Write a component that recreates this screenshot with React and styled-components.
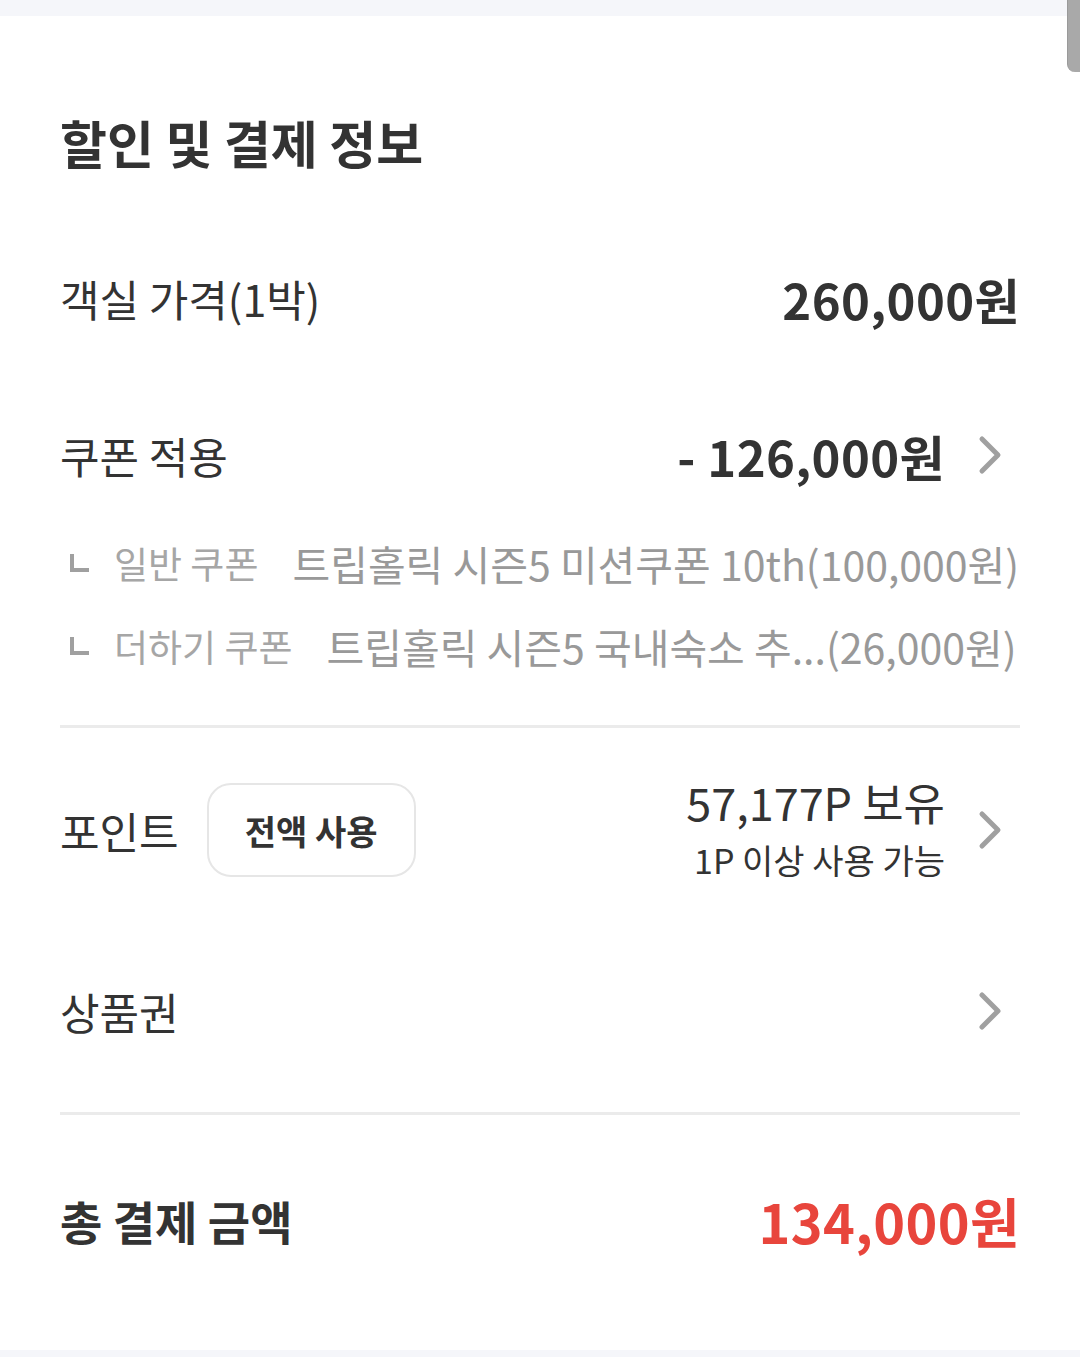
import React from "react";
import styled, { createGlobalStyle } from "styled-components";

const GlobalStyle = createGlobalStyle`
  html, body {
    margin: 0;
    padding: 0;
    background: #ffffff;
  }
  body {
    font-family: "Noto Sans CJK KR", "Noto Sans", sans-serif;
    color: #333333;
  }
`;

const Page = styled.div`
  position: relative;
  width: 1080px;
  height: 1357px;
  overflow: hidden;
  display: flex;
  flex-direction: column;
`;

const Band = styled.div`
  height: ${p => p.$h}px;
  background: #f5f6fa;
  flex-shrink: 0;
`;

const Scrollbar = styled.div`
  position: absolute;
  top: 0;
  right: 0;
  width: 12px;
  height: 72px;
  background: #a9a9a9;
  border-left: 1px solid #9a9a9a;
  border-bottom-left-radius: 8px;
`;

const Section = styled.div`
  flex: 1;
  padding: 0 60px;
  display: flex;
  flex-direction: column;
`;

const Title = styled.h2`
  margin: 91px 0 0;
  height: 70px;
  line-height: 70px;
  font-size: 51px;
  font-weight: 700;
  color: #333;
`;

const Row = styled.div`
  margin-top: ${p => p.$top}px;
  height: ${p => p.$h || 80}px;
  display: flex;
  align-items: center;
  justify-content: space-between;
`;

const Label = styled.div`
  font-size: ${p => (p.$bold ? 46 : 43)}px;
  font-weight: ${p => (p.$bold ? 700 : 400)};
  color: #333;
  display: flex;
  align-items: center;
  gap: 28px;
`;

const Right = styled.div`
  display: flex;
  align-items: center;
`;

const Amount = styled.div`
  font-size: ${p => p.$size || 49}px;
  font-weight: 700;
  color: ${p => p.$color || "#333"};
  letter-spacing: 0.4px;
`;

const SubList = styled.div`
  margin-top: 38px;
  display: flex;
  flex-direction: column;
  gap: 23px;
`;

const SubItem = styled.div`
  height: 60px;
  display: flex;
  align-items: center;
  white-space: nowrap;
  min-width: 0;
`;

const Corner = styled.span`
  width: 19px;
  height: 18px;
  margin: 0 0 0 10px;
  border-left: 4px solid #a0a0a0;
  border-bottom: 4px solid #a0a0a0;
  flex-shrink: 0;
  box-sizing: border-box;
`;

const SubLabel = styled.span`
  margin-left: 25px;
  font-size: 37px;
  color: #a6a6a6;
  flex-shrink: 0;
`;

const SubText = styled.span`
  margin-left: 34px;
  font-size: 41px;
  color: #999;
  overflow: hidden;
  text-overflow: ellipsis;
  flex: 1;
  min-width: 0;
`;

const Divider = styled.hr`
  margin: ${p => p.$top}px 0 0;
  border: none;
  height: 3px;
  background: #ebebeb;
`;

const PillButton = styled.button`
  height: 94px;
  width: 209px;
  border: 2px solid #e6e6e6;
  border-radius: 24px;
  background: #fff;
  font-family: inherit;
  font-size: 34px;
  font-weight: 700;
  color: #333;
  padding: 0;
`;

const PointInfo = styled.div`
  display: flex;
  flex-direction: column;
  align-items: flex-end;
`;

const PointMain = styled.div`
  font-size: 45px;
  line-height: 60px;
  color: #333;
`;

const PointSub = styled.div`
  font-size: 34px;
  line-height: 56px;
  color: #333;
`;

const Chevron = () => (
  <svg width="40" height="40" viewBox="0 0 40 40" style={{ marginLeft: 24, marginRight: 11, flexShrink: 0 }}>
    <path d="M13 4 L29 20 L13 36" fill="none" stroke="#a0a0a0" strokeWidth="5" strokeLinecap="round" strokeLinejoin="round" />
  </svg>
);

const coupons = [
  { label: "일반 쿠폰", text: "트립홀릭 시즌5 미션쿠폰 10th(100,000원)" },
  { label: "더하기 쿠폰", text: "트립홀릭 시즌5 국내숙소 추...(26,000원)" }
];

export default function App() {
  return (
    <>
      <GlobalStyle />
      <Page>
        <Band $h={16} />
        <Scrollbar />
        <Section>
          <Title>할인 및 결제 정보</Title>

          <Row $top={81}>
            <Label>객실 가격(1박)</Label>
            <Amount>260,000원</Amount>
          </Row>

          <Row $top={77}>
            <Label>쿠폰 적용</Label>
            <Right>
              <Amount>- 126,000원</Amount>
              <Chevron />
            </Right>
          </Row>

          <SubList>
            {coupons.map(c => (
              <SubItem key={c.label}>
                <Corner />
                <SubLabel>{c.label}</SubLabel>
                <SubText>{c.text}</SubText>
              </SubItem>
            ))}
          </SubList>

          <Divider $top={49} />

          <Row $top={52} $h={100}>
            <Label>
              포인트
              <PillButton>전액 사용</PillButton>
            </Label>
            <Right>
              <PointInfo>
                <PointMain>57,177P 보유</PointMain>
                <PointSub>1P 이상 사용 가능</PointSub>
              </PointInfo>
              <Chevron />
            </Right>
          </Row>

          <Row $top={91}>
            <Label>상품권</Label>
            <Chevron />
          </Row>

          <Divider $top={61} />

          <Row $top={65}>
            <Label $bold>총 결제 금액</Label>
            <Amount $size={54} $color="#e8453c">134,000원</Amount>
          </Row>
        </Section>
        <Band $h={7} />
      </Page>
    </>
  );
}
